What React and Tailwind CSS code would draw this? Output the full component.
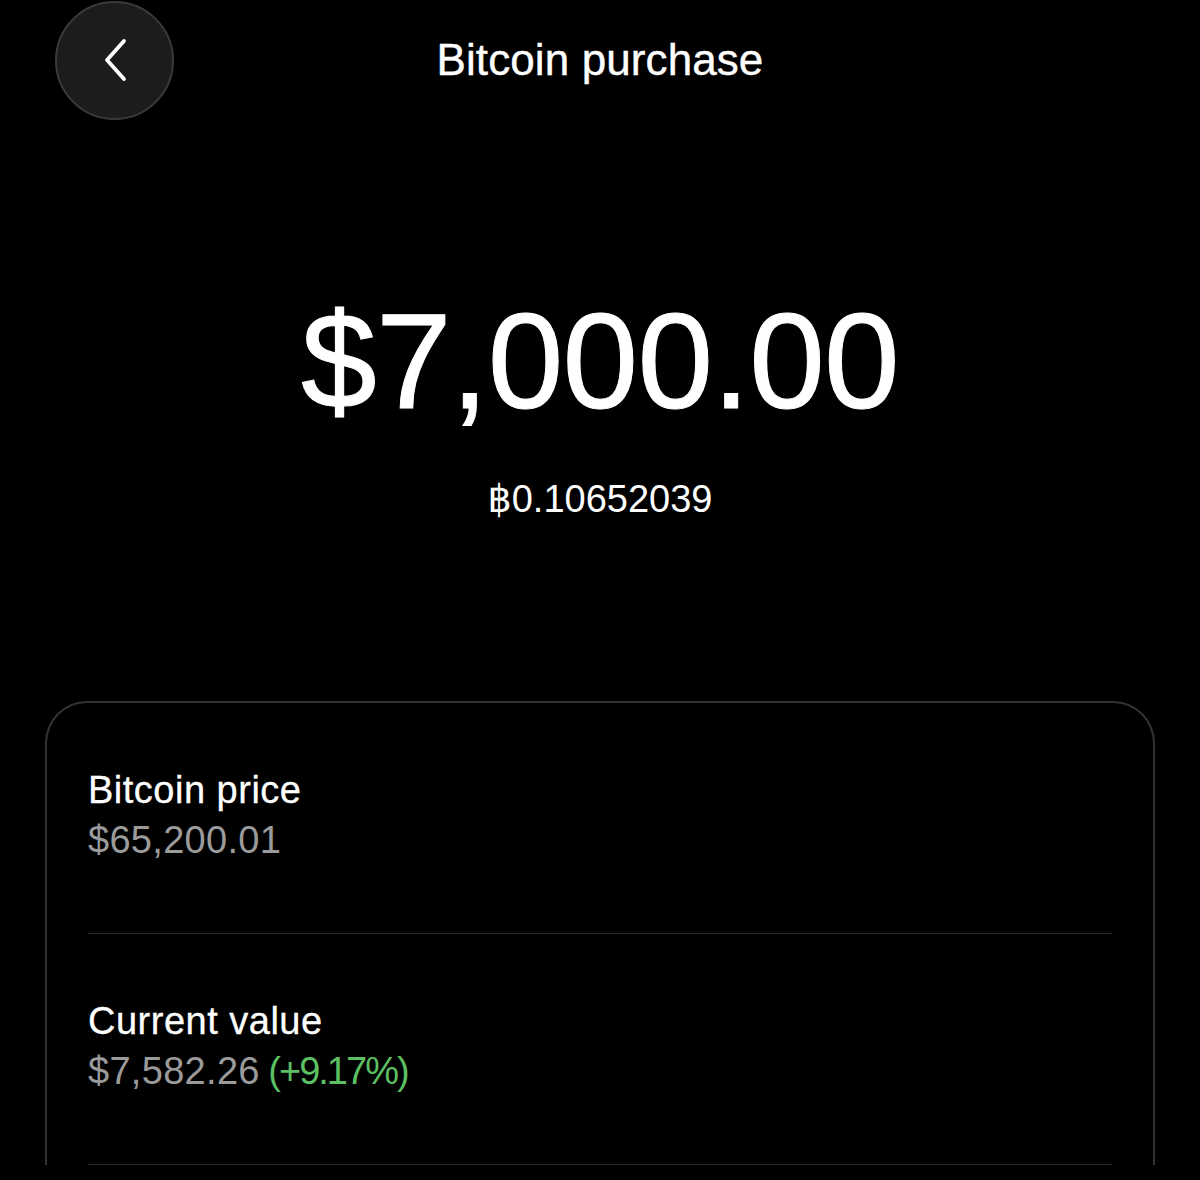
/**
 * App.jsx
 *
 * Bitcoin purchase detail screen.
 */

const rows = [
  { label: 'Bitcoin price', value: '$65,200.01' },
  { label: 'Current value', value: '$7,582.26', change: '(+9.17%)' },
]

function BackButton() {
  return (
    <button className="w-[119px] h-[119px] rounded-full bg-[#1c1c1d] border-2 border-[#3a3a3c] flex items-center justify-center">
      <svg width="26" height="44" viewBox="0 0 26 44" fill="none">
        <path d="M22 3 L5 22 L22 41" stroke="#fff" strokeWidth="3.8" strokeLinecap="round" strokeLinejoin="round" />
      </svg>
    </button>
  )
}

export default function App() {
  return (
    <div className="min-h-[1180px] w-[1200px] bg-black text-white overflow-hidden" style={{ fontFamily: '"Liberation Sans", Arial, sans-serif' }}>
      <header className="grid grid-cols-[1fr_auto_1fr] items-center h-[120px] pl-[55px]">
        <div><BackButton /></div>
        <h1 className="text-[44px] leading-none font-normal tracking-[0.1px] pr-[55px] [-webkit-text-stroke:0.4px_white]">Bitcoin purchase</h1>
        <div />
      </header>

      <div className="flex flex-col items-center pt-[173px]">
        <div className="text-[136px] leading-none tracking-[-0.8px] [-webkit-text-stroke:1px_white]">$7,000.00</div>
        <div className="mt-[51px] text-[38px] leading-none" style={{ fontFamily: '"Liberation Sans", "DejaVu Sans", "Noto Sans", sans-serif' }}>฿0.10652039</div>
      </div>

      <section className="mx-[45px] mt-[183px] border-2 border-b-0 border-[#333335] rounded-t-[42px] px-[41px]">
        {rows.map((row) => (
          <div key={row.label} className="pt-[62px] pb-[68px] border-b border-[#2a2a2c]">
            <div className="text-[38px] leading-[50px] tracking-[0.5px] [-webkit-text-stroke:0.3px_white]">{row.label}</div>
            <div className="text-[38px] leading-[50px] text-[#9b9b9b] tracking-[0.3px]">
              {row.value}
              {row.change ? <span className="text-[#5cbf62] tracking-[-2px]"> {row.change}</span> : null}
            </div>
          </div>
        ))}
      </section>
    </div>
  )
}
